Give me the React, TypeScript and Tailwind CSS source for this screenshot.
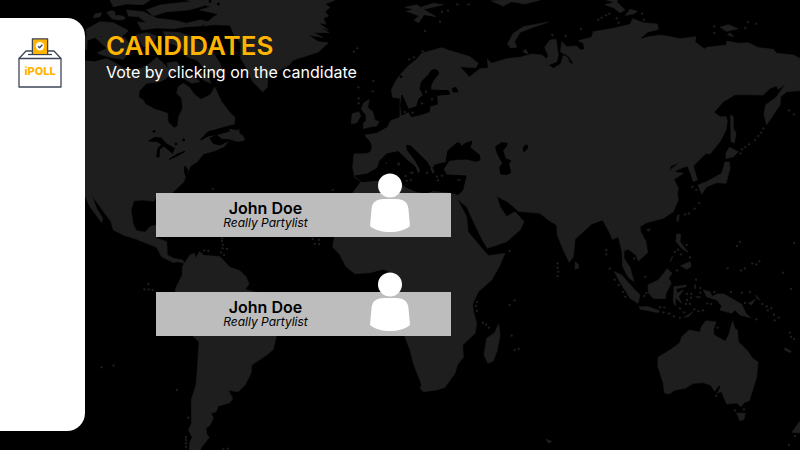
const LAND = '#1e1e1e';

const islandDots: [number, number][] = [
  [1228, 178], [1242, 172], [1268, 154], [1275, 93], [1320, 65], [1326, 36], [1344, 32], [1372, 13], [1406, 13],
  [1657, 105], [1697, 108], [1743, 87], [1795, 59], [1805, 53], [1818, 46], [1828, 41], [1850, 55], [1856, 68], [1926, 41], [1932, 59],
  [2143, 79], [2143, 99], [2244, 66], [2269, 71], [2236, 84], [2367, 331], [2382, 343],
  [2290, 385], [2284, 398], [2275, 408], [2265, 420], [2247, 433], [2236, 441], [2226, 448], [2222, 460],
  [2077, 561], [2089, 570], [2098, 609], [2084, 626], [2067, 640], [2055, 643],
  [1217, 528], [1220, 543], [1232, 540], [1281, 518], [1311, 530], [1326, 527], [1314, 541],
  [1278, 275], [1266, 310], [1296, 298], [1214, 336], [1238, 338],
  [1075, 262], [1076, 295], [1076, 310], [1118, 274], [1120, 243], [1062, 155], [1072, 145],
  [638, 567], [998, 570], [666, 715], [666, 723], [668, 735], [668, 745], [681, 747], [663, 757], [672, 765], [613, 751], [625, 753],
  [938, 717], [957, 719], [944, 732], [957, 732], [445, 852], [433, 868], [446, 868], [458, 870], [305, 1102], [341, 1096], [531, 1170],
  [565, 1253], [558, 1311], [558, 1320], [558, 1330], [558, 1341], [683, 1346], [670, 1348],
  [1529, 753], [1673, 790], [1673, 803], [1675, 815], [1673, 828], [1819, 750], [1819, 763], [1829, 806], [1844, 839], [1856, 855], [1869, 876], [1876, 890],
  [1431, 906], [1428, 918], [1431, 933], [1544, 901], [1529, 915], [1449, 968], [1458, 974], [1467, 983], [1535, 1007], [1544, 1050], [1556, 1047],
  [1936, 830], [1939, 879], [1933, 888], [1903, 775], [2025, 756], [2034, 749], [2043, 763], [2060, 735], [2070, 772], [2031, 811],
  [2088, 839], [2061, 882], [2074, 882], [2061, 900], [2073, 893], [2101, 864], [2101, 878], [2058, 912], [2040, 925], [2070, 912], [1980, 922], [1993, 922], [1990, 937], [2022, 949], [2040, 953], [2052, 937], [2083, 928], [2095, 934], [2109, 931], [2122, 910], [2134, 912],
  [2183, 805], [2223, 811], [2235, 805], [2257, 790], [2269, 793], [2278, 784], [2211, 738], [2220, 726], [2382, 729], [2349, 818], [2373, 867],
  [2143, 876], [2193, 876], [2226, 878], [2250, 876], [2235, 909], [2287, 912], [2300, 919], [2314, 925], [2303, 931], [2322, 944], [2336, 953], [2324, 961], [2269, 958],
  [2370, 998], [2373, 1011], [2382, 1017], [2153, 983], [2149, 1188], [2205, 1231], [2232, 1228], [2385, 1308], [2367, 1335],
];

const waterDots: [number, number][] = [
  [462, 394], [551, 420], [528, 432], [1203, 230], [385, 82], [408, 80], [350, 42], [655, 12], [630, 4],
];

const landPaths = [
  // North and Central America
  'M250 182L285 182L320 176L345 188L370 205L400 208L425 205L450 190L470 172L490 190L512 212L500 235L480 245L440 250L418 272L416 292L430 300L436 312L465 328L503 340L504 365L522 384L533 378L536 350L548 325L545 295L530 280L535 260L550 250L568 262L585 285L603 298L630 285L645 262L655 285L665 305L690 338L705 352L703 372L660 383L622 396L602 416L625 407L660 400L690 388L715 392L722 405L735 418L715 425L690 418L672 440L645 452L610 462L592 485L572 498L557 528L552 545L517 578L468 590L462 604L430 600L402 602L393 630L400 675L410 692L435 697L450 680L470 675L470 715L500 725L502 765L520 775L548 780L553 790L535 785L518 787L485 770L470 742L410 718L370 705L340 690L333 665L300 620L275 585L290 625L308 655L305 668L270 620L250 578Z',
  // South America
  'M553 790L570 765L583 760L588 775L598 755L612 766L660 770L690 802L720 812L738 830L747 852L735 868L780 880L835 960L828 1012L820 1048L800 1065L755 1095L753 1120L735 1155L715 1175L685 1171L698 1195L690 1208L655 1218L648 1235L633 1240L640 1255L630 1275L618 1285L620 1303L628 1312L606 1340L600 1350L568 1350L570 1325L577 1312L565 1290L575 1270L574 1200L588 1155L592 1110L597 1025L575 1005L525 885L527 865L547 825L547 800Z',
  // Greenland and Ellesmere
  'M560 0L1005 0L975 12L990 22L975 35L985 48L970 55L978 72L955 68L985 90L958 82L988 98L940 98L968 112L926 106L955 125L985 128L955 156L925 166L880 180L868 195L835 212L818 215L803 232L802 262L788 276L775 262L758 245L740 205L722 175L722 130L702 104L690 76L640 74L610 78L635 55L655 42L600 30L632 20Z',
  // Canadian Arctic archipelago
  'M330 0L450 0L430 14L380 12L340 20Z',
  'M440 30L480 15L540 8L620 0L610 18L565 30L500 35L460 48Z',
  'M285 42L305 38L300 50L280 54Z',
  'M320 38C350 20 340 50 370 48C390 60 350 64 335 55Z',
  'M380 30L430 35L470 55L530 62L560 70L600 60L630 66L600 78L560 80L520 86L470 84L425 90L412 66L440 68L415 50L385 48Z',
  'M258 88L300 65L340 68L385 92L365 112L300 108L262 120Z',
  'M285 112L335 105L400 118L395 145L370 178L330 172L290 160L320 145Z',
  'M408 104L440 98L470 108L460 130L430 140Z',
  'M490 95L540 98L575 110L610 130L640 160L660 190L668 215L650 225L620 212L590 180L560 170L540 140L505 128Z',
  'M500 190L530 185L545 205L515 225Z',
  'M590 215L625 225L632 250L610 240Z',
  'M545 232L575 225L600 245L575 250Z',
  'M250 105L262 112L260 165L250 165Z',
  // Newfoundland
  'M690 418L705 395L718 388L712 402L728 406L734 420L722 424L714 414Z',
  // Europe, Asia and Africa
  'M1062 462L1100 461C1122 455 1120 428 1100 413L1095 405L1130 400L1162 382L1172 362L1200 352L1200 330L1200 295L1178 292L1174 270L1186 245L1200 225L1222 200L1250 178L1265 160L1300 150L1325 143L1350 152L1378 160L1410 170L1435 190L1427 203L1380 200L1408 231L1440 206L1465 204L1462 178L1475 190L1520 176L1560 172L1595 162L1625 165L1640 176L1645 168L1634 142L1650 120L1668 118L1672 145L1675 165L1670 185L1645 195L1660 205L1682 192L1690 166L1702 172L1710 190L1722 192L1705 168L1682 156L1685 125L1700 140L1730 138L1742 150L1754 148L1750 130L1735 122L1775 112L1780 95L1840 85L1890 73L1898 56L1930 68L1972 72L1975 88L1940 100L1925 115L1970 105L2000 108L2040 116L2088 110L2085 125L2113 147L2120 142L2180 135L2180 123L2215 130L2245 128L2275 143L2320 148L2330 160L2380 165L2400 175L2400 272L2360 275L2342 290L2340 315L2300 374L2292 345L2297 315L2330 290L2358 250L2335 268L2330 258L2310 265L2290 285L2250 284L2205 284L2170 305L2142 337L2160 350L2178 350L2182 362L2178 390L2160 425L2130 462L2118 460L2080 498L2092 540L2080 545L2070 515L2062 498L2035 508L2020 518L2010 510L2040 487L2012 498L2008 514L2050 520L2022 538L2035 565L2032 582L2035 600L2020 635L1990 655L1940 668L1920 680L1922 695L1938 725L1943 758L1915 783L1908 765L1885 748L1872 752L1872 775L1890 802L1902 845L1885 832L1868 800L1866 755L1855 710L1837 718L1830 700L1808 660L1775 672L1725 718L1720 770L1708 787L1690 750L1672 705L1670 675L1645 660L1620 640L1555 634L1540 620L1522 605L1490 589L1500 620L1520 650L1545 635L1572 665L1560 690L1520 725L1462 745L1450 725L1425 675L1400 620L1372 598L1400 650L1404 695L1450 750L1465 767L1515 760L1500 795L1475 840L1435 875L1418 912L1420 935L1430 970L1425 1000L1388 1035L1390 1072L1372 1095L1365 1120L1335 1162L1310 1170L1270 1175L1260 1164L1265 1155L1240 1090L1230 1050L1215 1010L1190 960L1200 870L1170 815L1150 808L1110 818L1065 821L1038 800L1020 765L998 740L1005 700L1025 650L1060 575L1083 545L1064 532L1058 500Z',
  // Nordic islands
  'M1215 22L1250 14L1262 22L1300 10L1330 14L1270 28L1308 50L1272 44L1256 68L1242 60L1258 48L1220 34L1240 28Z',
  'M1474 3L1500 0L1620 0L1575 12L1535 5L1510 18Z',
  'M1522 132L1540 100L1570 80L1645 66L1600 82L1560 97L1544 125L1550 142L1532 144Z',
  'M1815 14L1850 5L1875 30L1860 38L1842 24Z', 'M1820 0L1855 0L1845 8Z', 'M1876 46L1890 28L1912 34L1900 42Z',
  'M2160 82L2185 74L2214 86L2180 94Z', 'M2182 105L2190 98L2202 110Z',
  'M1292 172L1305 158L1300 174Z', 'M1568 155L1578 148L1584 162Z',
  // British Isles
  'M1090 386L1112 380L1130 378L1137 365L1125 360L1118 335L1103 322L1108 298L1090 310L1084 328L1098 345L1098 362L1090 370Z',
  'M1056 342L1076 335L1082 348L1070 368L1054 372Z',
  // Japan and Sakhalin
  'M2192 345L2200 350L2200 385L2208 400L2203 428L2193 425Z',
  'M2178 460L2188 442L2215 455L2200 470L2178 476Z',
  'M2175 486L2188 486L2190 505L2178 550L2150 548L2120 560L2105 582L2094 555L2120 545L2165 520Z',
  'M2033 645L2038 645L2034 666L2030 660Z',
  // Madagascar and Sri Lanka
  'M1496 972L1500 1005L1492 1050L1480 1083L1464 1090L1452 1065L1460 1015L1484 998Z',
  'M1726 785L1736 795L1735 805L1725 807Z',
  // Southeast Asia
  'M1843 815L1865 825L1900 865L1920 885L1914 910L1890 895L1862 850Z',
  'M1917 920L1945 920L1978 932L1975 938L1920 927Z',
  'M1944 855L1975 840L2002 806L2016 820L2006 835L2014 850L1998 880L1996 896L1960 895L1945 878Z',
  'M2022 860L2060 855L2058 860L2028 866L2032 880L2050 870L2036 890L2045 910L2026 893L2027 918L2020 905Z',
  'M2030 702L2042 702L2040 725L2064 757L2045 745L2028 725Z',
  'M2042 797L2070 785L2073 800L2060 808Z', 'M2010 783L2018 768L2012 785Z',
  'M2052 952L2080 935L2065 950Z', 'M2085 852L2088 865L2083 865Z', 'M2087 890L2103 890L2095 894Z', 'M2002 939L2012 939L2008 944Z',
  'M2110 870L2130 875L2136 890L2150 882L2172 882L2225 913L2238 940L2252 953L2220 945L2205 930L2195 940L2160 930L2165 918L2150 900L2120 890Z',
  'M2245 910L2266 898L2255 915Z', 'M2268 885L2280 900L2270 895Z', 'M2354 1043L2374 1054L2370 1058L2354 1050Z', 'M1940 690L1952 686L1946 694Z',
  // Australia, Tasmania and New Zealand
  'M2118 962L2148 966L2140 990L2142 1005L2176 1024L2186 1005L2198 963L2204 985L2212 990L2215 1025L2240 1050L2258 1075L2274 1086L2270 1130L2248 1202L2236 1206L2222 1220L2210 1209L2180 1212L2165 1175L2148 1180L2132 1155L2110 1148L2080 1150L2056 1165L2025 1170L2008 1182L1993 1178L1990 1150L1974 1100L1974 1072L2010 1050L2040 1028L2045 1010L2068 990L2100 997L2104 980Z',
  'M2210 1239L2236 1240L2232 1258L2220 1263Z', 'M2400 1264L2375 1297L2400 1299Z', 'M1638 1318L1655 1324L1646 1330Z',
];

const waterPaths = [
  // Mediterranean and Adriatic
  'M1065 528L1100 523L1132 505L1140 482L1160 462L1195 455L1215 475L1245 500L1255 525L1262 510L1245 480L1222 450L1220 436L1232 438L1280 485L1295 510L1305 495L1345 485L1330 508L1340 525L1398 528L1388 570L1375 583L1345 576L1300 572L1280 578L1250 575L1215 560L1200 542L1140 540L1085 545Z',
  // Black Sea, Caspian and Aral
  'M1338 483L1344 452L1372 428L1382 432L1380 442L1400 428L1416 424L1410 443L1438 465L1440 480L1428 484L1400 477L1370 478Z',
  'M1487 440L1505 428L1522 430L1518 440L1508 452L1516 476L1532 482L1526 492L1532 518L1522 523L1502 522L1499 502L1508 490L1492 460Z',
  'M1570 445C1572 436 1580 432 1583 438C1584 446 1576 454 1571 454Z',
  // Baltic
  'M1288 222C1292 205 1316 205 1316 220C1308 235 1290 245 1292 270L1345 272L1350 282L1310 286L1312 312L1290 318L1288 335L1265 343L1235 350L1225 335L1205 345L1202 315L1206 285L1225 328L1250 320L1256 298L1270 285L1260 265L1265 245Z',
  'M1356 266L1368 262L1374 276L1360 276Z',
  // Great Lakes and St Lawrence
  'M446 423L465 412L485 415L497 430L523 445L517 460L510 453L492 438L478 448L477 472L470 470L474 445L485 433L470 424Z',
  'M508 478L532 462L555 454L535 466Z',
  'M602 420L625 395L665 387L690 392L665 400L625 408Z',
  'M630 415L650 405L665 418L690 420L660 435L640 430Z',
  'M255 150L290 160L310 175L285 183L252 178Z', 'M370 105L400 112L415 145L405 175L385 165L395 135Z',
  // Coastal inlets
  'M555 498L563 510L558 528L553 515Z', 'M2142 1180L2156 1160L2160 1160L2150 1178Z',
  'M1925 114L1945 98L1972 92L1970 105L1945 106Z',
];

const seaIslands = ['M1155 490L1162 486L1160 492Z', 'M1192 490L1200 486L1198 498L1193 497Z', 'M1225 518L1240 514L1240 523Z', 'M1368 538L1384 538L1378 544Z', 'M1290 505L1300 505L1304 518L1298 520Z'];

function WorldMap() {
  return (
    <svg
      className="absolute inset-0 h-full w-full"
      viewBox="0 0 2400 1350"
      preserveAspectRatio="xMidYMid slice"
      aria-hidden="true"
    >
      <g fill={LAND} stroke={LAND} strokeWidth="2" strokeLinejoin="round">
        {landPaths.map((d) => <path key={d} d={d} />)}
      </g>
      <g fill="#000" stroke="#000" strokeWidth="3" strokeLinejoin="round">
        {waterPaths.map((d) => <path key={d} d={d} />)}
        {waterDots.map(([x, y]) => <circle key={`${x}-${y}`} cx={x} cy={y} r="3" />)}
      </g>
      <g fill={LAND}>
        {seaIslands.map((d) => <path key={d} d={d} />)}
        {islandDots.map(([x, y]) => <circle key={`${x}-${y}`} cx={x} cy={y} r="3.5" />)}
      </g>
    </svg>
  );
}

function Logo() {
  return (
    <svg className="h-[50px] w-11" viewBox="0 0 44 50" role="img" aria-label="iPOLL">
      <g fill="none" stroke="#3c4558" strokeWidth="1.3" strokeLinejoin="round">
        <path d="M1 20.5H43V49H1Z" />
        <path d="M1 20.5L8 13H36L43 20.5" />
        <path d="M10 16.5H34" />
        <path d="M14.4 16V.8H29.6V16" fill="#ffb400" />
        <circle cx="22" cy="8.200" r="4.2" fill="#fff" stroke="none" />
        <path d="M20 8.2L21.6 9.8L24.4 6.8" />
      </g>
      <text x="22" y="37" textAnchor="middle" fill="#ffb400" className="font-['Inter',sans-serif] text-[11px] font-extrabold">
        iPOLL
      </text>
    </svg>
  );
}

function Avatar() {
  return (
    <svg className="absolute -top-5 right-10 h-[60px] w-[42px]" viewBox="0 0 42 60" fill="#fff" aria-hidden="true">
      <circle cx="21" cy="12.5" r="12" />
      <path d="M15 26H27C35 26 39 29.500 39.500 36.500L41 53C36 57 29 59 21 59C13 59 6 57 1 53L2.500 36.500C3 29.500 7 26 15 26Z" />
    </svg>
  );
}

const candidates = [
  { id: 1, name: 'John Doe', party: 'Really Partylist' },
  { id: 2, name: 'John Doe', party: 'Really Partylist' },
];

export default function App() {
  return (
    <div className="relative isolate flex min-h-screen bg-black font-['Inter',sans-serif]">
      <div className="absolute inset-0 -z-10 overflow-hidden">
        <WorldMap />
      </div>
      <aside className="mt-[18px] mb-[19px] flex w-[85px] shrink-0 flex-col items-center rounded-r-[18px] bg-white pt-5 pr-1.5">
        <Logo />
      </aside>
      <main className="min-w-0 flex-1 pt-8 pl-[21px]">
        <h1 className="text-[26px] leading-7 font-semibold text-[#ffb400]">CANDIDATES</h1>
        <p className="text-base leading-6 text-white">Vote by clicking on the candidate</p>
        <ul className="mt-[109px] flex flex-col gap-[55px] pr-6 pl-[50px]">
          {candidates.map((c) => (
            <li key={c.id}>
              <button
                type="button"
                className="relative flex h-11 w-full max-w-[295px] flex-col items-center justify-center bg-[#bdbdbd] pr-[76px] text-black"
              >
                <span className="text-base leading-4 font-semibold">{c.name}</span>
                <span className="text-xs leading-[14px] italic">{c.party}</span>
                <Avatar />
              </button>
            </li>
          ))}
        </ul>
      </main>
    </div>
  );
}
